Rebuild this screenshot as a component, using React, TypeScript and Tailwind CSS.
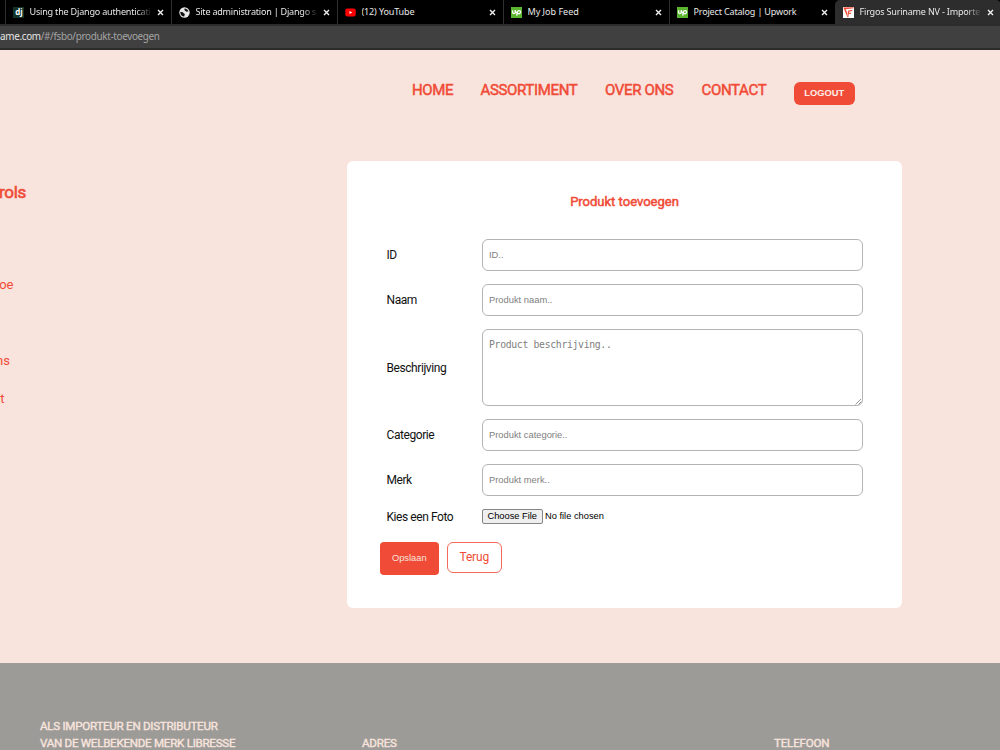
import type { ReactNode } from 'react';
import clsx from 'clsx';

type Tab = { title: string; icon: ReactNode; active?: boolean; fade?: boolean; tracking: string };

const DjangoIcon = () => (
  <svg viewBox="0 0 11 11" className="h-[11px] w-[11px]">
    <rect width="11" height="11" fill="#12352a" />
    <text x="2.2" y="8" fontSize="8" fontWeight="700" fontFamily="Open Sans, sans-serif" fill="#fff">
      dj
    </text>
  </svg>
);

const GlobeIcon = () => (
  <svg viewBox="0 0 11 11" className="h-[11px] w-[11px]">
    <circle cx="5.5" cy="5.5" r="5.2" fill="#e8e8e8" />
    <path
      d="M1.300 4.700c1.200.2 2.500.2 3 1 .4.800 1.300.7 1.500 1.500.1.800-.6 1-.5 2.300C2.800 9.500 1.200 7.400 1.300 4.700ZM5 1.900c1 .4.100 1.200 1.100 1.800.9.500 1.100 1.300 2.300.9.600-.2 1-.1 1.200.4C9.400 3.200 8.100 1.600 6 1.400Z"
      fill="#111"
    />
  </svg>
);

const YoutubeIcon = () => (
  <svg viewBox="0 0 11 11" className="h-[11px] w-[11px]">
    <rect x="0.3" y="1.6" width="10.4" height="7.8" rx="2" fill="#f00" />
    <path d="M4.500 4v3l2.600-1.500Z" fill="#fff" />
  </svg>
);

const UpworkIcon = () => (
  <svg viewBox="0 0 11 11" className="h-[11px] w-[11px]">
    <rect width="11" height="11" fill="#5bb52f" />
    <path
      d="M1.600 3.200v2c0 1.900 2.600 1.900 2.600 0v-2c.5 1.900 1.300 3 2.300 3.300M5.700 8.600l.7-3.600c.3-1.800 3.200-1.700 3.200.1 0 1.600-1.700 2.100-2.900 1.100"
      fill="none"
      stroke="#fff"
      strokeWidth="1.3"
    />
  </svg>
);

const FirgosIcon = () => (
  <svg viewBox="0 0 11 11" className="h-[11px] w-[11px]">
    <rect width="11" height="11" fill="#fff" />
    <path d="M.3.600 4.600 10.600 3.900 5 2.600 2.200 10.600 1.200V.2Z" fill="#ef4a36" />
    <path d="M4.800 10.300 5.500 4.200 9.300 3.400M5.400 6.500 8 6.100" fill="none" stroke="#ef4a36" strokeWidth="1.1" />
  </svg>
);

const TABS: Tab[] = [
  { title: 'Using the Django authenticati', icon: <DjangoIcon />, fade: true, tracking: 'tracking-[-0.200px]' },
  { title: 'Site administration | Django si', icon: <GlobeIcon />, fade: true, tracking: 'tracking-[-0.220px]' },
  { title: '(12) YouTube', icon: <YoutubeIcon />, tracking: 'tracking-[-0.150px]' },
  { title: 'My Job Feed', icon: <UpworkIcon />, tracking: 'tracking-[-0.020px]' },
  { title: 'Project Catalog | Upwork', icon: <UpworkIcon />, tracking: 'tracking-[-0.180px]' },
  {
    title: 'Firgos Suriname NV - Importe',
    icon: <FirgosIcon />,
    active: true,
    fade: true,
    tracking: 'tracking-[-0.200px]'
  }
];

const NAV_ITEMS = [
  { label: 'HOME', className: 'w-[68.500px]' },
  { label: 'ASSORTIMENT', className: 'w-[124.500px]' },
  { label: 'OVER ONS', className: 'w-[96.500px]' },
  { label: 'CONTACT', className: 'w-[92px]' }
];

const INPUT_CLASS =
  'block h-8 w-[380.500px] rounded-[6px] border border-[#b4b4b4] bg-white px-[6px] font-["Liberation_Sans",sans-serif] text-[9.350px] text-black placeholder:text-[#808080] outline-none';

function BrowserTab({ tab }: { tab: Tab }) {
  return (
    <div
      className={clsx(
        'flex h-6 w-[166px] shrink-0 items-center',
        tab.active ? 'rounded-t-[5px] bg-[#2d2d2d]' : 'border-l border-[#303030]'
      )}
    >
      <div className={clsx('shrink-0', tab.active ? 'ml-[8px]' : 'ml-[7px]')}>{tab.icon}</div>
      <div
        className={clsx(
          'ml-[5.500px] w-[121.500px] shrink-0 overflow-hidden whitespace-nowrap font-["Noto_Sans",sans-serif] text-[9.050px] leading-6 text-[#e8e8e8]',
          tab.tracking,
          tab.fade && '[mask-image:linear-gradient(to_right,#000_88%,transparent_101%)]'
        )}
      >
        {tab.title}
      </div>
      <svg viewBox="0 0 7 7" className="ml-[6px] h-[7px] w-[7px] shrink-0">
        <path d="M1 1l5 5M6 1L1 6" stroke="#f0f0f0" strokeWidth="1.4" />
      </svg>
    </div>
  );
}

function Field({ label, children, className }: { label: string; children: ReactNode; className?: string }) {
  return (
    <div className={clsx('flex items-center', className)}>
      <label className="w-[95.500px] shrink-0 text-[12px] leading-4 tracking-[-0.430px] text-[#111]">
        {label}
      </label>
      {children}
    </div>
  );
}

export default function App() {
  return (
    <div className='flex h-[750px] w-[1000px] flex-col overflow-hidden bg-[#f8e4dd] font-["Roboto",sans-serif]'>
      <div className="flex h-6 shrink-0 bg-black pl-[5px]">
        {TABS.map((tab) => (
          <BrowserTab key={tab.title} tab={tab} />
        ))}
      </div>
      <div className='h-[26px] shrink-0 border-b-2 border-t-2 border-[#2b2b2b] bg-[#404040] font-["Noto_Sans",sans-serif] text-[9.900px] leading-[20px] tracking-[-0.320px] text-[#a5a5a5]'>
        <span className="text-[#e6e6e6]">ame.com</span>/#/fsbo/produkt-toevoegen
      </div>

      <header className="flex h-[111px] shrink-0 pl-[412px] pt-[32px]">
        {NAV_ITEMS.map((item) => (
          <a
            key={item.label}
            className={clsx(
              'shrink-0 whitespace-nowrap text-[15px] leading-[17px] tracking-[-0.340px] text-[#f04b37] [-webkit-text-stroke:0.500px_#f04b37]',
              item.className
            )}
          >
            {item.label}
          </a>
        ))}
        <button className='h-[23px] w-[61.500px] rounded-[6px] bg-[#f04b37] font-["Liberation_Sans",sans-serif] text-[9.350px] font-bold text-[#fdeeea]'>
          LOGOUT
        </button>
      </header>

      <main className="flex h-[502px] shrink-0">
        <aside className="flex w-[346.500px] shrink-0 flex-col text-[13px] leading-[18px] text-[#f04b37]">
          <h2 className="mt-[21px] flex w-[26px] justify-end whitespace-nowrap text-[17px] leading-5 tracking-[-0.300px] [-webkit-text-stroke:0.600px_#f04b37]">
            Controls
          </h2>
          <a className="mt-[74px] flex w-[13.500px] justify-end whitespace-nowrap">Produkt toe</a>
          <a className="mt-[58px] flex w-[10px] justify-end whitespace-nowrap">Over ons</a>
          <a className="mt-[20px] flex w-[4.500px] justify-end whitespace-nowrap">Contact</a>
        </aside>

        <section className="h-[446.500px] w-[555.500px] rounded-[6px] bg-white pl-[40px]">
          <h1 className="mr-[39.500px] pt-[32px] text-center text-[13px] leading-[18px] text-[#f04b37] [-webkit-text-stroke:0.500px_#f04b37]">
            Produkt toevoegen
          </h1>
          <Field label="ID" className="mt-[28px]">
            <input className={INPUT_CLASS} placeholder="ID.." />
          </Field>
          <Field label="Naam" className="mt-[13px]">
            <input className={INPUT_CLASS} placeholder="Produkt naam.." />
          </Field>
          <Field label="Beschrijving" className="mt-[13px]">
            <div className="relative">
              <textarea
                className='block h-[77px] w-[380.500px] resize-none rounded-[6px] border border-[#b4b4b4] bg-white px-[6px] pt-[8px] font-["DejaVu_Sans_Mono",monospace] text-[9.800px] leading-[13px] tracking-[-0.330px] outline-none placeholder:text-[#808080]'
                placeholder="Product beschrijving.."
              />
              <svg viewBox="0 0 7 7" className="absolute bottom-px right-px h-[7px] w-[7px]">
                <path d="M.5 6.500l5.500-5.500M3.500 6.500l3-3" stroke="#777" strokeWidth="0.8" />
              </svg>
            </div>
          </Field>
          <Field label="Categorie" className="mt-[13px]">
            <input className={INPUT_CLASS} placeholder="Produkt categorie.." />
          </Field>
          <Field label="Merk" className="mt-[13px]">
            <input className={INPUT_CLASS} placeholder="Produkt merk.." />
          </Field>
          <Field label="Kies een Foto" className="mt-[12.500px]">
            <div className='flex items-center font-["Liberation_Sans",sans-serif] text-[9.300px] leading-[13px] text-black'>
              <button className="h-[15px] w-[60.500px] rounded-[2px] border border-[#858585] bg-[#efefef] leading-[13px]">
                Choose File
              </button>
              <span className="ml-[2.500px]">No file chosen</span>
            </div>
          </Field>
          <div className="ml-[-7px] mt-[17px] flex items-start">
            <button className='h-[33px] w-[59.500px] rounded-[4px] bg-[#f04b37] pt-px font-["Liberation_Sans",sans-serif] text-[9.300px] text-[#f8e4dd]'>
              Opslaan
            </button>
            <button className="ml-[8px] h-[31.500px] w-[54.500px] rounded-[6px] border border-[#f26a59] text-[12px] tracking-[-0.200px] text-[#f04b37]">
              Terug
            </button>
          </div>
        </section>
      </main>

      <footer className="flex h-[87px] shrink-0 bg-[#9d9b98] pl-[40px] pt-[55px] text-[11.600px] leading-[16.500px] tracking-[-0.270px] text-[#f8e4dd] [-webkit-text-stroke:0.400px_#f8e4dd]">
        <div className="w-[322px] whitespace-nowrap">
          <p>ALS IMPORTEUR EN DISTRIBUTEUR</p>
          <p>VAN DE WELBEKENDE MERK LIBRESSE</p>
        </div>
        <p className="w-[412px] pt-[17px] tracking-[-0.200px]">ADRES</p>
        <p className="pt-[17px] tracking-[-0.200px]">TELEFOON</p>
      </footer>
    </div>
  );
}
